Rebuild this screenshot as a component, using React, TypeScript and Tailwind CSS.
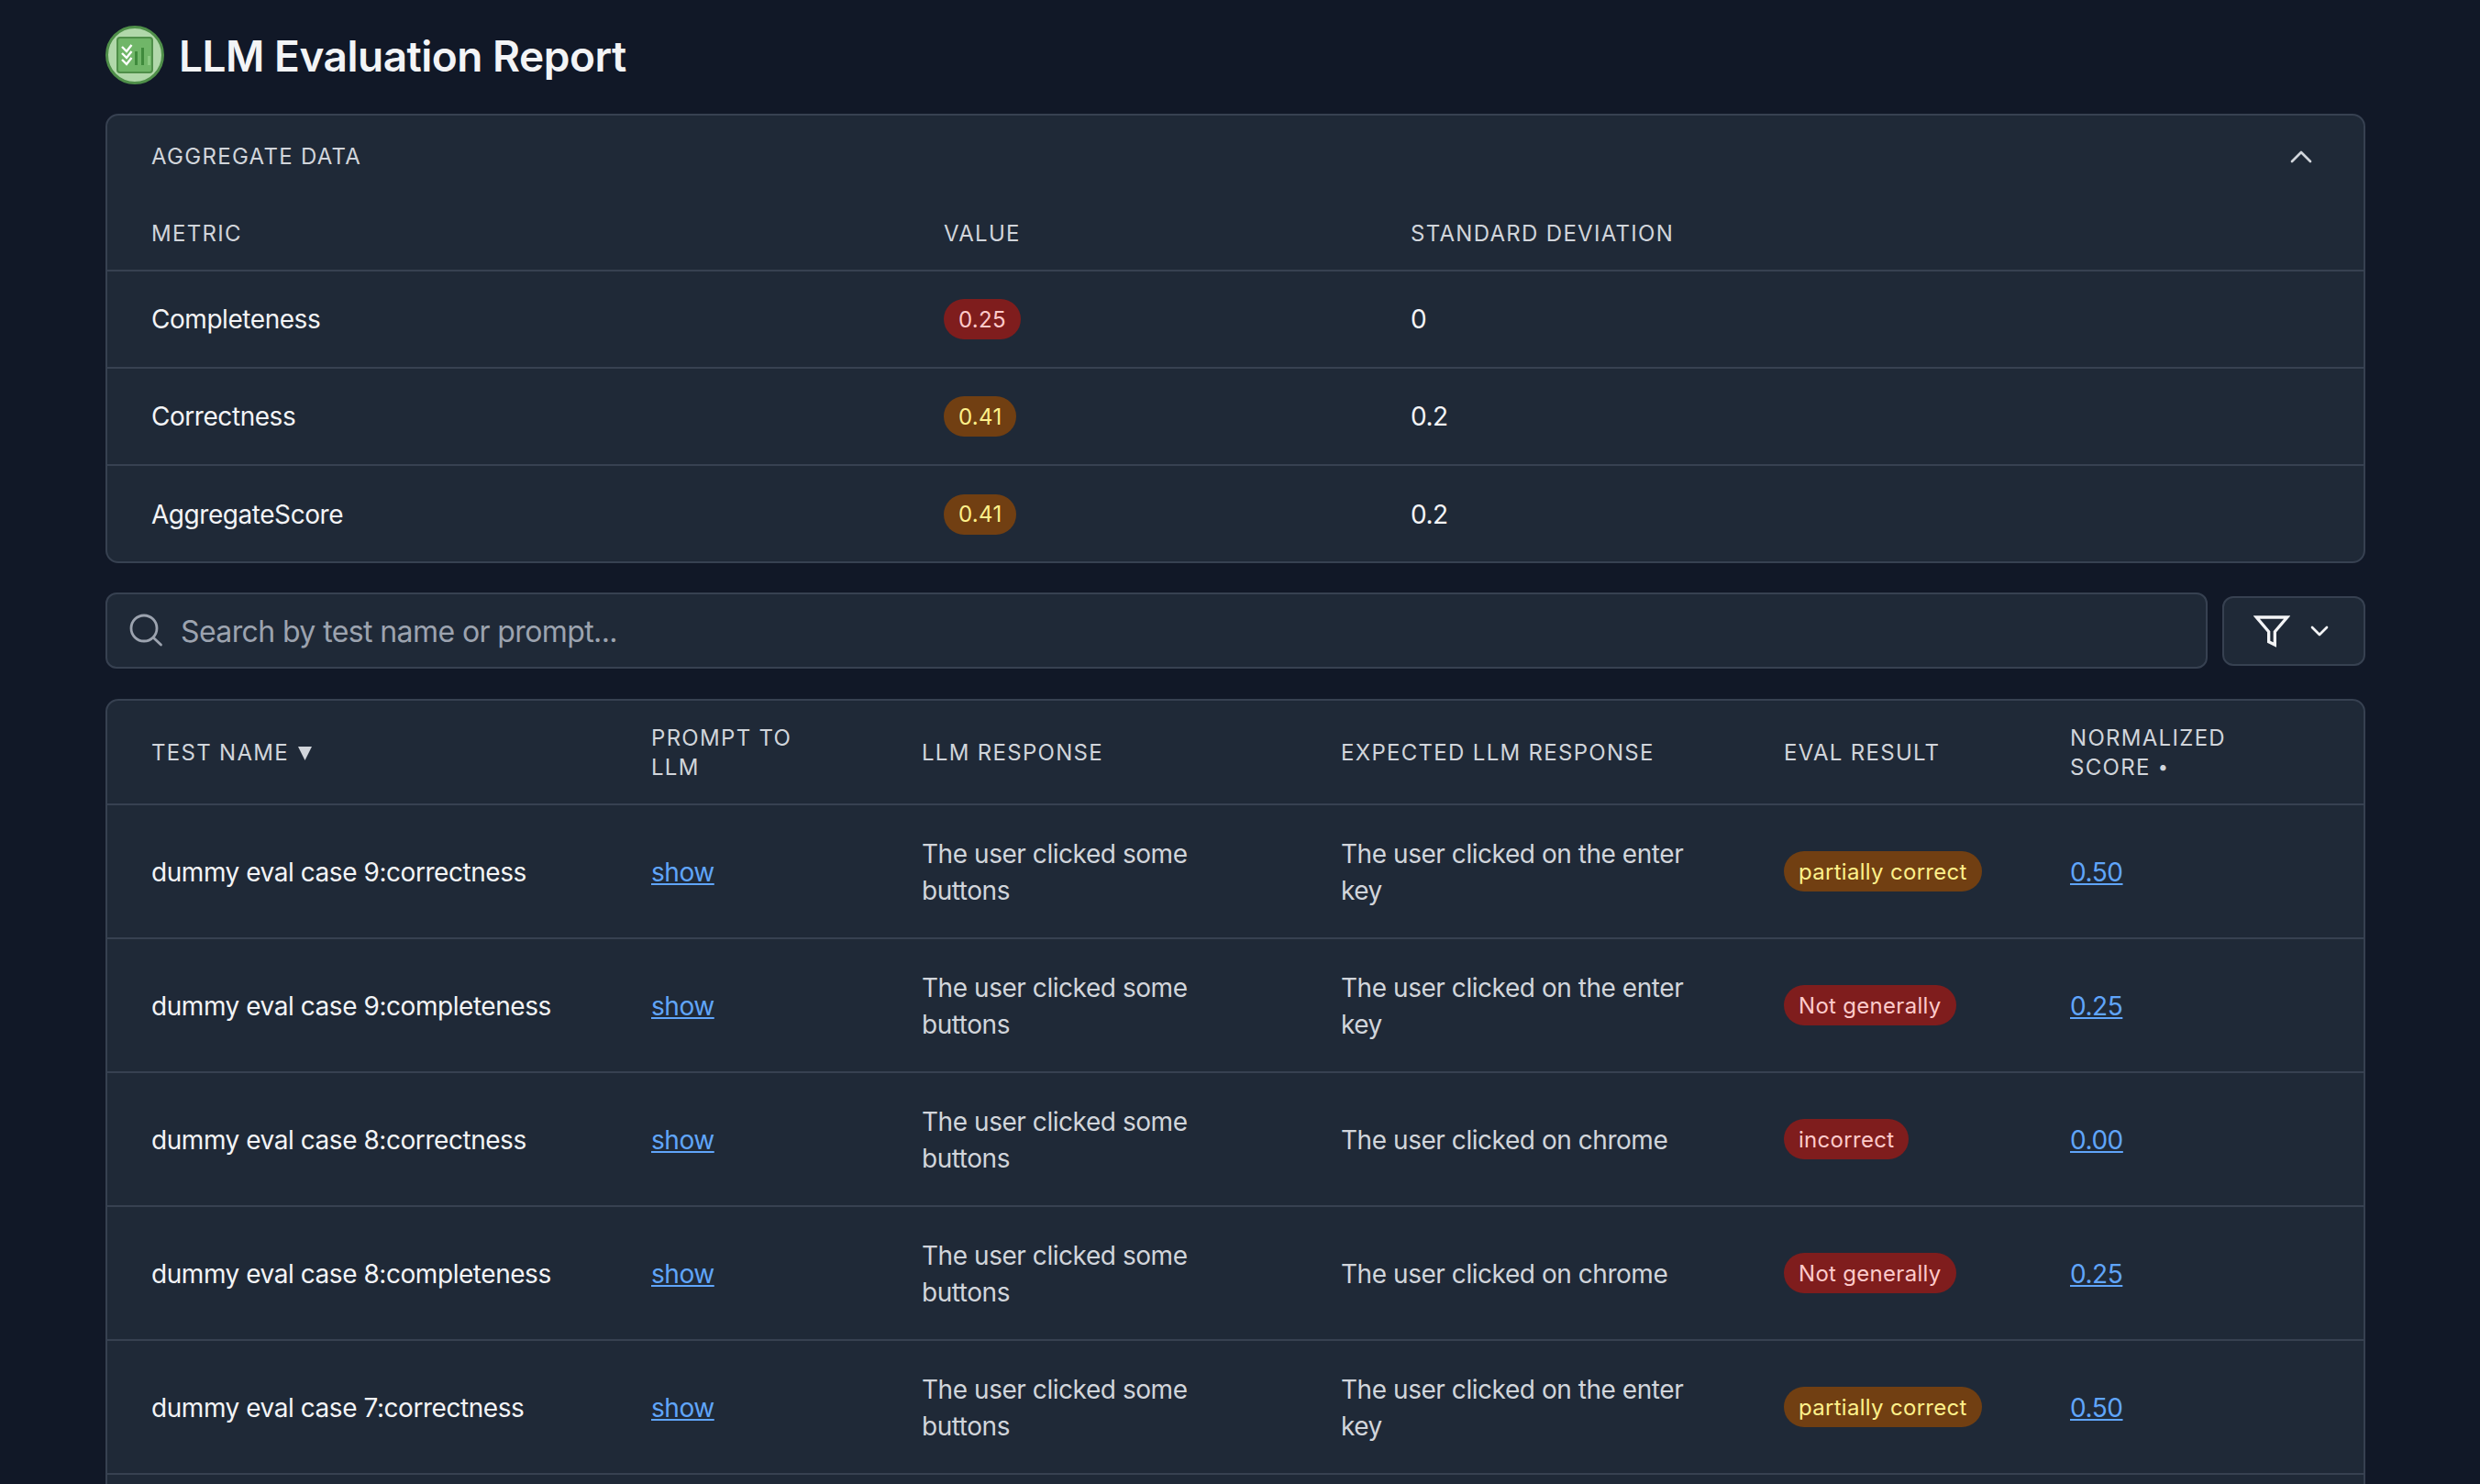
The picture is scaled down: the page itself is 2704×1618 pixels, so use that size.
import { ChevronDown, ChevronUp } from 'lucide-react'

const tones = { red: 'bg-[#7f1d1d] text-[#fecaca]', yellow: 'bg-[#713f12] text-[#fef08a]' }

const metrics = [
  { name: 'Completeness', value: '0.25', tone: tones.red, dev: '0' },
  { name: 'Correctness', value: '0.41', tone: tones.yellow, dev: '0.2' },
  { name: 'AggregateScore', value: '0.41', tone: tones.yellow, dev: '0.2' },
]

const enterKey = 'The user clicked on the enter key'
const chrome = 'The user clicked on chrome'

const rows = [
  { name: 'dummy eval case 9:correctness', expected: enterKey, result: 'partially correct', tone: tones.yellow, score: '0.50' },
  { name: 'dummy eval case 9:completeness', expected: enterKey, result: 'Not generally', tone: tones.red, score: '0.25' },
  { name: 'dummy eval case 8:correctness', expected: chrome, result: 'incorrect', tone: tones.red, score: '0.00' },
  { name: 'dummy eval case 8:completeness', expected: chrome, result: 'Not generally', tone: tones.red, score: '0.25' },
  { name: 'dummy eval case 7:correctness', expected: enterKey, result: 'partially correct', tone: tones.yellow, score: '0.50' },
]

function Logo() {
  return (
    <svg width="64" height="64" viewBox="0 0 64 64" className="shrink-0">
      <circle cx="32" cy="32" r="30.500" fill="#b1d8aa" stroke="#4f8f49" strokeWidth="3" />
      <rect x="13" y="13" width="38" height="38" rx="3" fill="#70b668" stroke="#4f8f49" strokeWidth="2" />
      <path d="M18 23l5 5 5.500-7M18 30l5 5 5.500-7M18 37l5 5 5.500-7" fill="none" stroke="#fff" strokeWidth="2.400" />
      <rect x="32" y="28" width="3" height="15" fill="#3f8a3c" />
      <rect x="39" y="24" width="3" height="19" fill="#3f8a3c" />
      <rect x="46" y="33" width="3" height="10" fill="#8ccb83" />
    </svg>
  )
}

function Badge({ tone, children }: { tone: string; children: string }) {
  return (
    <span className={`inline-flex h-[44px] items-center rounded-full px-[16px] pt-[1px] text-[24px] leading-[32px] tracking-[0.3px] ${tone}`}>
      {children}
    </span>
  )
}

export default function App() {
  return (
    <div
      className="h-screen overflow-hidden bg-[#111827] pt-[28px] pr-[125px] pl-[115px] text-[#f3f4f6]"
      style={{ fontFamily: 'Inter, "Liberation Sans", sans-serif' }}
    >
      {/* Header */}
      <div className="flex h-[64px] items-center gap-[16px]">
        <Logo />
        <h1 className="pt-[2px] text-[46px] leading-[64px] font-semibold tracking-[-0.5px] text-[#f3f4f6]">LLM Evaluation Report</h1>
      </div>

      {/* Aggregate data */}
      <div className="mt-[32px] h-[490px] overflow-hidden rounded-[14px] border-2 border-[#374151] bg-[#1f2937]">
        <div className="flex h-[84px] items-center justify-between pt-[5px] pr-[48px] pl-[48px]">
          <span className="text-[24px] tracking-[1.3px] text-[#d1d5db]">AGGREGATE DATA</span>
          <ChevronUp size={40} strokeWidth={1.6} className="text-[#d1d5db]" />
        </div>
        <table className="w-full table-fixed border-collapse">
          <colgroup>
            <col className="w-[865px]" />
            <col className="w-[508px]" />
            <col />
          </colgroup>
          <thead>
            <tr className="h-[85px] border-b-2 border-[#374151] text-left text-[24px] tracking-[1.3px] text-[#d1d5db]">
              <th className="pt-[6px] pl-[48px] font-normal">METRIC</th>
              <th className="pt-[6px] pl-[47px] font-normal">VALUE</th>
              <th className="pt-[6px] pl-[48px] font-normal">STANDARD DEVIATION</th>
            </tr>
          </thead>
          <tbody className="text-[28px] tracking-[-0.45px]">
            {metrics.map((m) => (
              <tr key={m.name} className="h-[106px] border-b-2 border-[#374151] last:border-b-0">
                <td className="pl-[48px]">{m.name}</td>
                <td className="pl-[47px]">
                  <Badge tone={m.tone}>{m.value}</Badge>
                </td>
                <td className="pl-[48px]">{m.dev}</td>
              </tr>
            ))}
          </tbody>
        </table>
      </div>

      {/* Search and filter */}
      <div className="mt-[32px] flex items-center gap-[16px]">
        <div className="flex h-[83px] flex-1 items-center gap-[16px] rounded-[12px] border-2 border-[#374151] bg-[#1f2937] pl-[24px]">
          <svg width="40" height="40" viewBox="0 0 40 40" fill="none" stroke="#9ca3af" strokeWidth="2.800" strokeLinecap="round" className="shrink-0">
            <circle cx="16" cy="17" r="14" />
            <path d="M26.500 27.500L34.500 35" />
          </svg>
          <input
            placeholder="Search by test name or prompt..."
            className="flex-1 bg-transparent pt-[2px] text-[32px] tracking-[-0.6px] text-[#f3f4f6] outline-none placeholder:text-[#9ca3af]"
          />
        </div>
        <button className="flex h-[76px] w-[156px] items-center justify-center gap-[16px] rounded-[12px] border-2 border-[#374151] bg-[#1f2937] text-[#f3f4f6]">
          <svg width="40" height="40" viewBox="0 0 24 24" fill="none" stroke="currentColor" strokeWidth="2" className="shrink-0">
            <polygon points="22 3 2 3 10 12.460 10 19 14 21 14 12.460 22 3" />
          </svg>
          <ChevronDown size={32} strokeWidth={2} className="shrink-0" />
        </button>
      </div>

      {/* Results */}
      <div className="mt-[33px] h-[900px] overflow-hidden rounded-[14px] border-2 border-[#374151] bg-[#1f2937]">
        <table className="w-full table-fixed border-collapse">
          <colgroup>
            <col className="w-[545px]" />
            <col className="w-[295px]" />
            <col className="w-[457px]" />
            <col className="w-[483px]" />
            <col className="w-[312px]" />
            <col />
          </colgroup>
          <thead>
            <tr className="h-[113px] border-b-2 border-[#374151] text-left text-[24px] leading-[32px] tracking-[1.3px] text-[#d1d5db]">
              <th className="pt-[2px] pl-[48px] font-normal">
                <span className="inline-flex items-center gap-[10px]">
                  TEST NAME
                  <svg width="15" height="15" viewBox="0 0 15 15" fill="#d1d5db">
                    <polygon points="0 0 15 0 7.500 15" />
                  </svg>
                </span>
              </th>
              <th className="pt-[2px] pr-[40px] pl-[48px] font-normal">PROMPT TO LLM</th>
              <th className="pt-[2px] pl-[48px] font-normal">LLM RESPONSE</th>
              <th className="pt-[2px] pl-[48px] font-normal">EXPECTED LLM RESPONSE</th>
              <th className="pt-[2px] pl-[48px] font-normal">EVAL RESULT</th>
              <th className="pt-[2px] pr-[80px] pl-[48px] font-normal">
                NORMALIZED SCORE <span className="align-[2px] text-[20px] leading-[20px]">•</span>
              </th>
            </tr>
          </thead>
          <tbody className="text-[28px] leading-[40px] tracking-[-0.45px]">
            {rows.map((r) => (
              <tr key={r.name} className="h-[146px] border-b-2 border-[#374151]">
                <td className="pt-[1px] pl-[48px]">{r.name}</td>
                <td className="pt-[1px] pl-[48px]">
                  <a href="#" className="text-[#60a5fa] underline">show</a>
                </td>
                <td className="pt-[1px] pr-[48px] pl-[48px] text-[#d1d5db]">The user clicked some buttons</td>
                <td className="pt-[1px] pr-[48px] pl-[48px] text-[#d1d5db]">{r.expected}</td>
                <td className="pl-[48px]">
                  <Badge tone={r.tone}>{r.result}</Badge>
                </td>
                <td className="pt-[1px] pl-[48px]">
                  <a href="#" className="text-[#60a5fa] underline">{r.score}</a>
                </td>
              </tr>
            ))}
          </tbody>
        </table>
      </div>
    </div>
  )
}
